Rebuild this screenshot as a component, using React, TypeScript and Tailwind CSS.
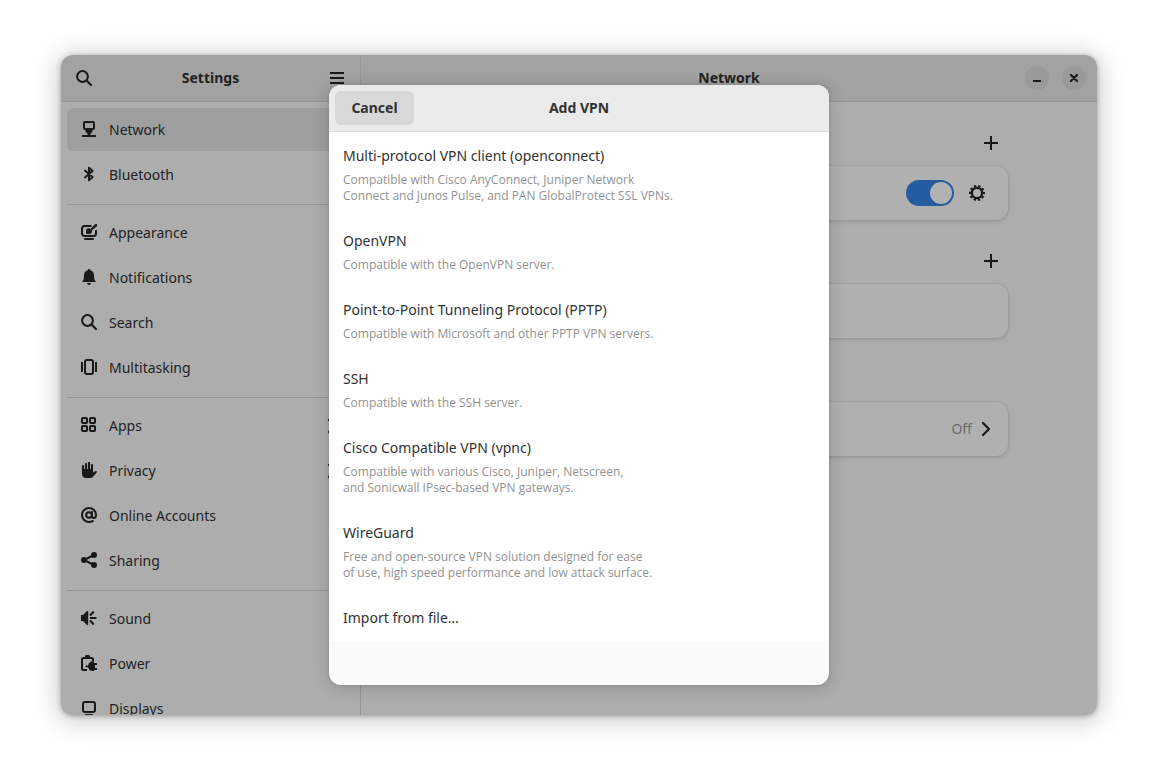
import React from "react";

type IconProps = { children: React.ReactNode; className?: string };

function Icon({ children, className = "" }: IconProps) {
  return (
    <svg
      viewBox="0 0 16 16"
      aria-hidden="true"
      fill="none"
      stroke="currentColor"
      strokeWidth="2"
      className={`size-4 shrink-0 text-[#242424] ${className}`}
    >
      {children}
    </svg>
  );
}

const SearchIcon = () => (
  <Icon>
    <circle cx="6.5" cy="6.5" r="5.4" />
    <path d="M10.5 10.5l4.5 4.5" strokeWidth="2.2" strokeLinecap="round" />
  </Icon>
);

const ChevronIcon = () => (
  <Icon>
    <path d="M5 2l6 6-6 6" strokeWidth="2.2" strokeLinejoin="round" strokeLinecap="round" />
  </Icon>
);

const PlusIcon = () => (
  <Icon>
    <path d="M8 1v14M1 8h14" />
  </Icon>
);

const GearIcon = () => (
  <Icon>
    <circle cx="8" cy="8" r="5.1" strokeWidth="2.3" />
    <circle cx="8" cy="8" r="6.9" strokeDasharray="2.3 2.035" strokeDashoffset="1.15" strokeWidth="2.2" />
  </Icon>
);

const NetworkIcon = () => (
  <Icon>
    <rect x="3" y="1" width="10" height="7" rx="1" />
    <path d="M4.5 9h7v1.800L9.500 12.500V14h-3v-1.500L4.500 10.800z" fill="currentColor" stroke="none" />
    <path d="M1 15h14" />
  </Icon>
);

const BluetoothIcon = () => (
  <Icon>
    <path d="M4 4.6l7.6 6.4L8 14.3V1.7L11.6 5 4 11.4" strokeLinecap="round" strokeLinejoin="round" />
  </Icon>
);

const AppearanceIcon = () => (
  <Icon>
    <path d="M10.500 2H3.500A2.500 2.500 0 0 0 1 4.500v5A2.500 2.500 0 0 0 3.500 12h9A2.500 2.500 0 0 0 15 9.500V6" />
    <path d="M4 15h8" strokeLinecap="round" />
    <path
      d="M5 9.800V7a2.900 2.900 0 0 1 3.300-2.800L9.500 5 14 .3 16 0v2.200L10.700 6.500 11 7.500A2.700 2.700 0 0 1 8.300 10z"
      fill="currentColor"
      stroke="none"
    />
  </Icon>
);

const BellIcon = () => (
  <Icon>
    <path
      d="M8 0c.8 0 1.200.5 1.300 1.200C11.800 1.800 13 3.800 13 6.500c0 3 .4 4.500 1.500 5.500v1h-13v-1C2.600 11 3 9.500 3 6.500c0-2.700 1.200-4.700 3.700-5.300C6.800.5 7.200 0 8 0zM6 14h4c-.2 1.200-1 2-2 2s-1.800-.8-2-2z"
      fill="currentColor"
      stroke="none"
    />
  </Icon>
);

const MultitaskingIcon = () => (
  <Icon>
    <rect x="4" y="1" width="8" height="14" rx="2" />
    <path d="M1 3v10M15 3v10" />
  </Icon>
);

const AppsIcon = () => (
  <Icon>
    <rect x="1" y="1" width="5" height="5" rx="1" />
    <rect x="9" y="1" width="5" height="5" rx="1" />
    <rect x="1" y="9" width="5" height="5" rx="1" />
    <rect x="9" y="9" width="5" height="5" rx="1" />
  </Icon>
);

const HandIcon = () => (
  <Icon>
    <path d="M2 10V4M5 10V2M8 10V1M11 10V3" strokeWidth="2.100" strokeLinecap="round" />
    <path
      d="M1 7h11v3.500l2.600-1.400c1-.4 1.800.5 1.100 1.400L12.600 14c-1 1.500-2 2-3.600 2H5c-2.500 0-4-1.500-4-4z"
      fill="currentColor"
      stroke="none"
    />
  </Icon>
);

const AtIcon = () => (
  <Icon>
    <circle cx="8" cy="8" r="2.800" />
    <path
      d="M11 5v4c0 1.300.7 2 1.800 2S15 10 15 8a7 7 0 1 0-7 7c1.600 0 2.700-.4 3.800-1"
      strokeLinecap="round"
    />
  </Icon>
);

const ShareIcon = () => (
  <Icon>
    <path d="M13 3L3 8l10 5" />
    <g fill="currentColor" stroke="none">
      <circle cx="3" cy="8" r="3" />
      <circle cx="13" cy="3" r="3" />
      <circle cx="13" cy="13" r="3" />
    </g>
  </Icon>
);

const SoundIcon = () => (
  <Icon>
    <path d="M0 5h2l4-4h1.200v14H6l-4-4H0z" fill="currentColor" stroke="none" />
    <path d="M9 5.500l3.700-4M9 8h6.500M9 10.500l3.700 4" />
  </Icon>
);

const PowerIcon = () => (
  <Icon>
    <path d="M12 6V4.500A1.500 1.500 0 0 0 10.500 3h-8A1.500 1.500 0 0 0 1 4.500v9A1.500 1.500 0 0 0 2.500 15H6" />
    <path
      d="M4 3V1.500C4 .6 4.600 0 5.500 0h2C8.400 0 9 .6 9 1.500V3zM4.500 10.500h2.600C7.600 8 9.200 6.200 11.500 6.200H13V8h3v2h-2v3h2v2h-3v1h-1.500c-2.300 0-3.900-1.500-4.400-3.800H4.500z"
      fill="currentColor"
      stroke="none"
    />
  </Icon>
);

const DisplaysIcon = () => (
  <Icon>
    <rect x="2" y="2" width="12" height="10" rx="2" />
    <path d="M5 15h6" strokeLinecap="round" />
  </Icon>
);

type NavItem = { label: string; icon: () => React.ReactElement; nested?: boolean; active?: boolean };

const navGroups: NavItem[][] = [
  [
    { label: "Network", icon: NetworkIcon, active: true },
    { label: "Bluetooth", icon: BluetoothIcon },
  ],
  [
    { label: "Appearance", icon: AppearanceIcon },
    { label: "Notifications", icon: BellIcon },
    { label: "Search", icon: SearchIcon },
    { label: "Multitasking", icon: MultitaskingIcon },
  ],
  [
    { label: "Apps", icon: AppsIcon, nested: true },
    { label: "Privacy", icon: HandIcon, nested: true },
    { label: "Online Accounts", icon: AtIcon },
    { label: "Sharing", icon: ShareIcon },
  ],
  [
    { label: "Sound", icon: SoundIcon },
    { label: "Power", icon: PowerIcon },
    { label: "Displays", icon: DisplaysIcon },
  ],
];

const vpnTypes: { name: string; description: string[] }[] = [
  {
    name: "Multi-protocol VPN client (openconnect)",
    description: [
      "Compatible with Cisco AnyConnect, Juniper Network",
      "Connect and Junos Pulse, and PAN GlobalProtect SSL VPNs.",
    ],
  },
  { name: "OpenVPN", description: ["Compatible with the OpenVPN server."] },
  {
    name: "Point-to-Point Tunneling Protocol (PPTP)",
    description: ["Compatible with Microsoft and other PPTP VPN servers."],
  },
  { name: "SSH", description: ["Compatible with the SSH server."] },
  {
    name: "Cisco Compatible VPN (vpnc)",
    description: [
      "Compatible with various Cisco, Juniper, Netscreen,",
      "and Sonicwall IPsec-based VPN gateways.",
    ],
  },
  {
    name: "WireGuard",
    description: [
      "Free and open-source VPN solution designed for ease",
      "of use, high speed performance and low attack surface.",
    ],
  },
  { name: "Import from file…", description: [] },
];

function Sidebar() {
  return (
    <aside className="flex w-[300px] shrink-0 flex-col border-r border-[#d6d6d6]">
      <header className="flex h-[47px] shrink-0 items-center justify-between border-b border-[#d6d6d6] bg-[#e8e8e8] px-[6px]">
        <button aria-label="Search settings" className="grid size-[34px] place-items-center">
          <SearchIcon />
        </button>
        <h1 className="font-bold">Settings</h1>
        <button aria-label="Main menu" className="grid size-[34px] place-items-center">
          <Icon>
            <path d="M1 3h14M1 8h14M1 13h14" />
          </Icon>
        </button>
      </header>
      <nav className="flex min-h-0 flex-1 flex-col overflow-y-auto px-[6px] pt-[6px] [scrollbar-width:none]">
        {navGroups.map((group, index) => (
          <ul
            key={index}
            className={index > 0 ? "mt-[6px] border-t border-[#d6d6d6] pt-[6px]" : ""}
          >
            {group.map(({ label, icon: ItemIcon, nested, active }) => (
              <li key={label} className="mb-[2px]">
                <a
                  href="#"
                  aria-current={active ? "page" : undefined}
                  className={`flex h-[43px] items-center gap-3 rounded-md px-[14px] ${active ? "bg-[#e4e4e4]" : ""}`}
                >
                  <span className="pb-px">
                    <ItemIcon />
                  </span>
                  <span className="flex-1">{label}</span>
                  {nested && <ChevronIcon />}
                </a>
              </li>
            ))}
          </ul>
        ))}
      </nav>
    </aside>
  );
}

const cardClass =
  "flex h-[54px] items-center justify-end rounded-xl bg-[#fcfcfc] shadow-[0_0_0_1px_rgba(0,0,0,0.03),0_1px_3px_1px_rgba(0,0,0,0.07),0_2px_6px_2px_rgba(0,0,0,0.03)]";

function NetworkPanel() {
  return (
    <main className="flex min-w-0 flex-1 flex-col">
      <header className="grid h-[47px] shrink-0 grid-cols-[1fr_auto_1fr] items-center border-b border-[#d6d6d6] bg-[#e8e8e8] px-[11px]">
        <h2 className="col-start-2 font-bold">Network</h2>
        <div className="flex justify-end gap-[13px]">
          <button aria-label="Minimize" className="grid size-6 place-items-center rounded-full bg-[#dcdcdc]">
            <Icon>
              <path d="M4 11h8" />
            </Icon>
          </button>
          <button aria-label="Close" className="grid size-6 place-items-center rounded-full bg-[#dcdcdc]">
            <Icon>
              <path d="M5 5l6 6M11 5l-6 6" strokeWidth="2.200" strokeLinecap="round" />
            </Icon>
          </button>
        </div>
      </header>
      <div className="mx-auto w-full max-w-[558px]">
        <div className="flex h-16 items-end justify-end pb-[6px]">
          <button aria-label="Add connection" className="grid size-[34px] place-items-center">
            <PlusIcon />
          </button>
        </div>
        <div className={`${cardClass} gap-[6px] pr-[14px]`}>
          <input
            type="checkbox"
            role="switch"
            aria-label="Wired"
            defaultChecked
            className="h-[26px] w-12 appearance-none rounded-full bg-[#3584e4] p-[2px] before:ml-auto before:block before:size-[22px] before:rounded-full before:bg-white before:content-['']"
          />
          <button aria-label="Connection options" className="grid size-[34px] place-items-center">
            <GearIcon />
          </button>
        </div>
        <div className="flex h-16 items-end justify-end pb-[6px]">
          <button aria-label="Add VPN" className="grid size-[34px] place-items-center">
            <PlusIcon />
          </button>
        </div>
        <div className={cardClass} />
        <button aria-label="Proxy" className={`${cardClass} mt-16 w-full gap-[6px] pr-[14px]`}>
          <span className="text-[#9a9a9a]">Off</span>
          <ChevronIcon />
        </button>
      </div>
    </main>
  );
}

function AddVpnDialog() {
  return (
    <div
      role="dialog"
      aria-modal="true"
      aria-labelledby="add-vpn-title"
      className="flex h-[600px] max-h-full w-[500px] max-w-full flex-col overflow-hidden rounded-xl bg-[#fafafa] shadow-[0_2px_16px_2px_rgba(0,0,0,0.14),0_0_3px_rgba(0,0,0,0.15)]"
    >
      <header className="grid h-[47px] shrink-0 grid-cols-[1fr_auto_1fr] items-center border-b border-[#d9d9d9] bg-[#ebebeb] px-[6px]">
        <button className="h-[34px] w-[79px] rounded-md bg-[#d8d8d8] font-bold">Cancel</button>
        <h2 id="add-vpn-title" className="font-bold">
          Add VPN
        </h2>
      </header>
      <ul className="bg-white">
        {vpnTypes.map(({ name, description }) => (
          <li key={name}>
            <button className="block w-full px-[14px] pt-[14px] pb-[13px] text-left">
              <span className="block">{name}</span>
              {description.length > 0 && (
                <span className="mt-[6px] block font-['Open_Sans','Noto_Sans',sans-serif] text-xs text-[#929292]">
                  {description.map((line) => (
                    <span key={line} className="block">
                      {line}
                    </span>
                  ))}
                </span>
              )}
            </button>
          </li>
        ))}
      </ul>
    </div>
  );
}

export default function App() {
  return (
    <div className="flex h-screen bg-white px-[61px] pt-[55px] pb-[67px] font-['Noto_Sans','Open_Sans',sans-serif] text-sm leading-5 text-[#323232]">
      <div className="relative flex flex-1 overflow-hidden rounded-xl bg-[#f8f8f8] shadow-[0_3px_24px_4px_rgba(0,0,0,0.2),0_1px_5px_rgba(0,0,0,0.3)]">
        <Sidebar />
        <NetworkPanel />
        <div className="absolute inset-0 flex items-center justify-center bg-black/30">
          <AddVpnDialog />
        </div>
      </div>
    </div>
  );
}
